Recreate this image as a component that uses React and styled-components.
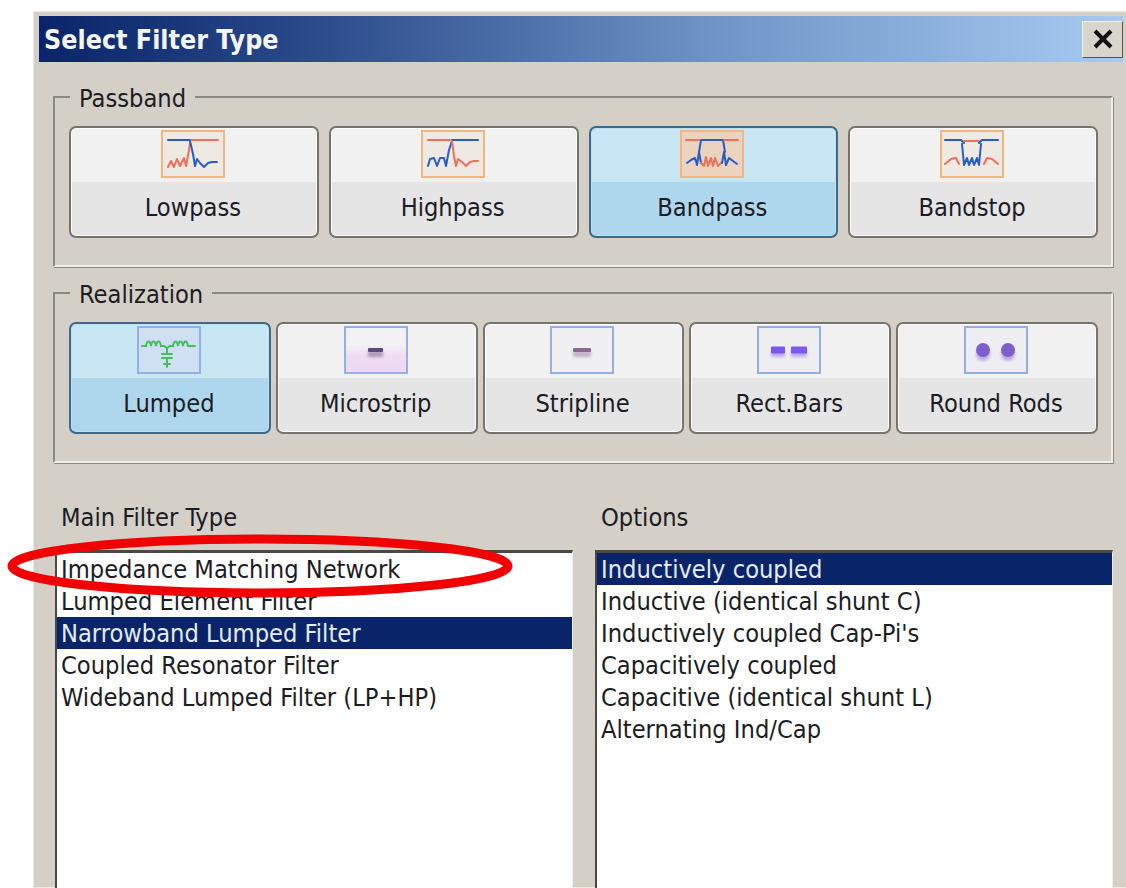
import React from "react";
import styled, { createGlobalStyle } from "styled-components";

const GlobalStyle = createGlobalStyle`
  html, body {
    margin: 0;
    background: #fff;
  }
  body {
    font-family: "DejaVu Sans", "Liberation Sans", sans-serif;
    font-stretch: condensed;
    color: #1c1c24;
  }
`;

const Page = styled.div`
  position: relative;
  width: 1126px;
  height: 888px;
  overflow: hidden;
  background: #fff;
`;
const Dialog = styled.div`
  box-sizing: border-box;
  width: 1093px;
  height: 877px;
  margin: 11px 0 0 33px;
  padding: 4px 3px 0 5px;
  background: #d4d0c8;
  border: 1px solid #ebe9e4;
  border-right: 0;
`;
const TitleBar = styled.div`
  display: flex;
  align-items: center;
  justify-content: space-between;
  height: 46px;
  padding: 0 0 0 5px;
  background: linear-gradient(90deg, #0a246a 0%, #2a4a8a 25%, #6f93c6 62%, #a6caf0 100%);
`;
const Title = styled.h1`
  margin: 0;
  font-size: 26.6px;
  font-weight: 700;
  color: #f4f6fb;
`;
const CloseButton = styled.div`
  display: flex;
  align-items: center;
  justify-content: center;
  box-sizing: border-box;
  width: 41px;
  height: 37px;
  background: #d8d5cd;
  border: 1px solid;
  border-color: #f4f2ee #55534e #55534e #f4f2ee;
`;
const Group = styled.fieldset`
  box-sizing: border-box;
  width: 1060px;
  margin: ${(p) => p.$top}px 0 0 14px;
  min-width: 0;
  padding: 12px 13px 27px 14px;
  border: 2px solid;
  border-color: #8b8983 #f0eee9 #f0eee9 #8b8983;
  box-shadow: 1px 1px 0 #8b8983;
`;
const Legend = styled.legend`
  margin-left: 1px;
  padding: 4px 9px 0;
  font-size: 25.2px;
  line-height: 30px;
`;
const ButtonRow = styled.div`
  display: grid;
  grid-template-columns: repeat(${(p) => p.$count}, 1fr);
  gap: ${(p) => p.$gap}px;
`;
const FilterButton = styled.div`
  box-sizing: border-box;
  display: flex;
  flex-direction: column;
  align-items: center;
  height: 112px;
  padding: 2px 2px 0 0;
  border: 2px solid ${(p) => (p.$active ? "#3d6a88" : "#75746f")};
  border-radius: 7px;
  box-shadow: inset 0 0 0 1px ${(p) => (p.$active ? "#bcdff0" : "#fbfbfb")};
  background: ${(p) =>
    p.$active
      ? "linear-gradient(#c9e6f5 0 50%, #aed7ed 50%)"
      : "linear-gradient(#f1f1f1 0 50%, #e5e5e5 50%)"};
`;
const ButtonLabel = styled.span`
  margin-top: 15px;
  font-size: 25.2px;
  line-height: 30px;
`;
const IconSvg = styled.svg`
  display: block;
  width: 64px;
  height: 48px;
`;
const Columns = styled.div`
  display: grid;
  grid-template-columns: 518px 518px;
  gap: 22px;
  margin: 40px 0 0 16px;
`;
const ListLabel = styled.div`
  margin: 0 0 17px 6px;
  font-size: 25.2px;
  line-height: 30px;
`;
const ListBox = styled.div`
  box-sizing: border-box;
  height: 400px;
  background: #fff;
  border: solid;
  border-width: 3px 1px 1px 2px;
  border-color: #4a4843 #f0eee9 #f0eee9 #4a4843;
`;
const ListRow = styled.div`
  height: 32px;
  padding-left: 4px;
  font-size: 25.2px;
  line-height: 34px;
  white-space: nowrap;
  color: ${(p) => (p.$selected ? "#e4ecfa" : "#1c1c24")};
  background: ${(p) => (p.$selected ? "#0a246a" : "transparent")};
`;
const Annotation = styled.svg`
  position: absolute;
  left: 6px;
  top: 534px;
  width: 508px;
  height: 66px;
`;

const ORANGE = "#ee7058";
const BLUE = "#2a5cc8";

// Response curves: each icon is a list of [colour, path] strokes
const passbandIcons = {
  Lowpass: [
    [BLUE, "M7 10H30"],
    [ORANGE, "M30 10H57"],
    [ORANGE, "M7 37L10 31L13 37L16 29L19 36L23 28L25 36L28 20L29 13"],
    [BLUE, "M29 11L32 24L34 36L36 29L39 33L43 37L47 33L51 32H56"],
  ],
  Highpass: [
    [ORANGE, "M7 10H29"],
    [BLUE, "M31 10H57"],
    [BLUE, "M7 36L9 29L13 28L16 36L19 28L23 28L25 36L28 20L31 11"],
    [ORANGE, "M31 11L33 26L35 36L37 29L41 32L45 36L49 32L53 31H57"],
  ],
  Bandpass: [
    [ORANGE, "M6 10H19"],
    [BLUE, "M19 22L21 10H43L45 22"],
    [ORANGE, "M44 10H58"],
    [BLUE, "M7 33L11 30L15 28L17 35L19 22L21 33"],
    [ORANGE, "M21 33L24 36L26 27L28 36L31 28L33 36L35 28L38 36L41 33"],
    [BLUE, "M42 33L44 22L46 35L49 28L53 31L57 34"],
  ],
  Bandstop: [
    [BLUE, "M5 10H21L24 13"],
    [ORANGE, "M24 11H39"],
    [BLUE, "M39 13L42 10H58"],
    [ORANGE, "M5 34L11 29L16 28L19 34"],
    [BLUE, "M22 14L24 35L27 28L29 35L32 28L34 35L37 28L39 35L41 14"],
    [ORANGE, "M44 34L47 28L52 29L58 34"],
  ],
};

const PassbandIcon = ({ name, active }) => (
  <IconSvg viewBox="0 0 64 48">
    <rect
      x="1"
      y="1"
      width="62"
      height="46"
      fill={active ? "#ecd3c0" : "#efe9e4"}
      stroke="#f3b67f"
      strokeWidth="2"
    />
    {passbandIcons[name].map(([color, d]) => (
      <path
        key={d}
        d={d}
        fill="none"
        stroke={color}
        strokeWidth="2"
        strokeLinejoin="round"
        strokeLinecap="round"
      />
    ))}
  </IconSvg>
);

const LumpedArt = () => (
  <g fill="none" stroke="#46bd5c" strokeWidth="2" strokeLinecap="round">
    <path d="M5 20H9C10 14 13 14 14 20C15 14 18 14 19 20C20 14 23 14 24 20H27L30 22L33 20H36C37 14 40 14 41 20C42 14 45 14 46 20C47 14 50 14 51 20H58" />
    <path d="M30 22V28M25 28H35M25 32H35M30 32V41M27 38H33" />
  </g>
);

// Conductor cross-sections with a soft shadow under them
const BarArt = ({ x, w, h = 4, fill }) => (
  <g>
    <rect x={x} y="25" width={w} height="6" fill={fill} opacity="0.45" filter="url(#softShadow)" />
    <rect x={x} y={24 - h / 2} width={w} height={h} rx="1" fill={fill} />
  </g>
);

const RodArt = ({ cx }) => (
  <g>
    <circle cx={cx} cy="28" r="7" fill="#7a5cc8" opacity="0.45" filter="url(#softShadow)" />
    <circle cx={cx} cy="24" r="7" fill="#7d5fc9" />
  </g>
);

const realizationArt = {
  Lumped: { bg: "#cfe0f3", art: <LumpedArt /> },
  Microstrip: { bg: "url(#pinkFade)", art: <BarArt x={24} w={15} fill="#5c4a7c" /> },
  Stripline: { bg: "#f0f0f2", art: <BarArt x={23} w={18} fill="#8a6a92" /> },
  "Rect.Bars": {
    bg: "#eeeef0",
    art: (
      <>
        <BarArt x={14} w={14} h={7} fill="#7a58f0" />
        <BarArt x={34} w={16} h={7} fill="#7a58f0" />
      </>
    ),
  },
  "Round Rods": {
    bg: "#eeeef2",
    art: (
      <>
        <RodArt cx={19} />
        <RodArt cx={44} />
      </>
    ),
  },
};

const RealizationIcon = ({ name }) => (
  <IconSvg viewBox="0 0 64 48">
    <defs>
      <linearGradient id="pinkFade" x1="0" y1="0" x2="0" y2="1">
        <stop offset="0.4" stopColor="#f2f1f3" />
        <stop offset="0.62" stopColor="#f0dcf2" />
        <stop offset="1" stopColor="#ecd8f2" />
      </linearGradient>
      <filter id="softShadow" x="-50%" y="-50%" width="200%" height="200%">
        <feGaussianBlur stdDeviation="1.5" />
      </filter>
    </defs>
    <rect
      x="1"
      y="1"
      width="62"
      height="46"
      fill={realizationArt[name].bg}
      stroke="#94aee6"
      strokeWidth="2"
    />
    {realizationArt[name].art}
  </IconSvg>
);

const passbands = ["Lowpass", "Highpass", "Bandpass", "Bandstop"];
const realizations = ["Lumped", "Microstrip", "Stripline", "Rect.Bars", "Round Rods"];
const filterTypes = [
  "Impedance Matching Network",
  "Lumped Element Filter",
  "Narrowband Lumped Filter",
  "Coupled Resonator Filter",
  "Wideband Lumped Filter (LP+HP)",
];
const options = [
  "Inductively coupled",
  "Inductive (identical shunt C)",
  "Inductively coupled Cap-Pi's",
  "Capacitively coupled",
  "Capacitive (identical shunt L)",
  "Alternating Ind/Cap",
];

const App = () => {
  return (
    <Page>
      <GlobalStyle />
      <Dialog>
        <TitleBar>
          <Title>Select Filter Type</Title>
          <CloseButton>
            <svg width="22" height="20" viewBox="0 0 22 20">
              <path d="M3 2L19 18M19 2L3 18" stroke="#111" strokeWidth="4" />
            </svg>
          </CloseButton>
        </TitleBar>

        <Group $top={18}>
          <Legend>Passband</Legend>
          <ButtonRow $count={4} $gap={10}>
            {passbands.map((name) => (
              <FilterButton key={name} $active={name === "Bandpass"}>
                <PassbandIcon name={name} active={name === "Bandpass"} />
                <ButtonLabel>{name}</ButtonLabel>
              </FilterButton>
            ))}
          </ButtonRow>
        </Group>

        <Group $top={9}>
          <Legend>Realization</Legend>
          <ButtonRow $count={5} $gap={5}>
            {realizations.map((name) => (
              <FilterButton key={name} $active={name === "Lumped"}>
                <RealizationIcon name={name} />
                <ButtonLabel>{name}</ButtonLabel>
              </FilterButton>
            ))}
          </ButtonRow>
        </Group>

        <Columns>
          <div>
            <ListLabel>Main Filter Type</ListLabel>
            <ListBox>
              {filterTypes.map((item) => (
                <ListRow key={item} $selected={item === "Narrowband Lumped Filter"}>
                  {item}
                </ListRow>
              ))}
            </ListBox>
          </div>
          <div>
            <ListLabel>Options</ListLabel>
            <ListBox>
              {options.map((item) => (
                <ListRow key={item} $selected={item === "Inductively coupled"}>
                  {item}
                </ListRow>
              ))}
            </ListBox>
          </div>
        </Columns>
      </Dialog>

      <Annotation viewBox="0 0 508 66">
        <ellipse cx="254" cy="32" rx="248" ry="27" fill="none" stroke="#f00000" strokeWidth="9" />
      </Annotation>
    </Page>
  );
};

export default App;
